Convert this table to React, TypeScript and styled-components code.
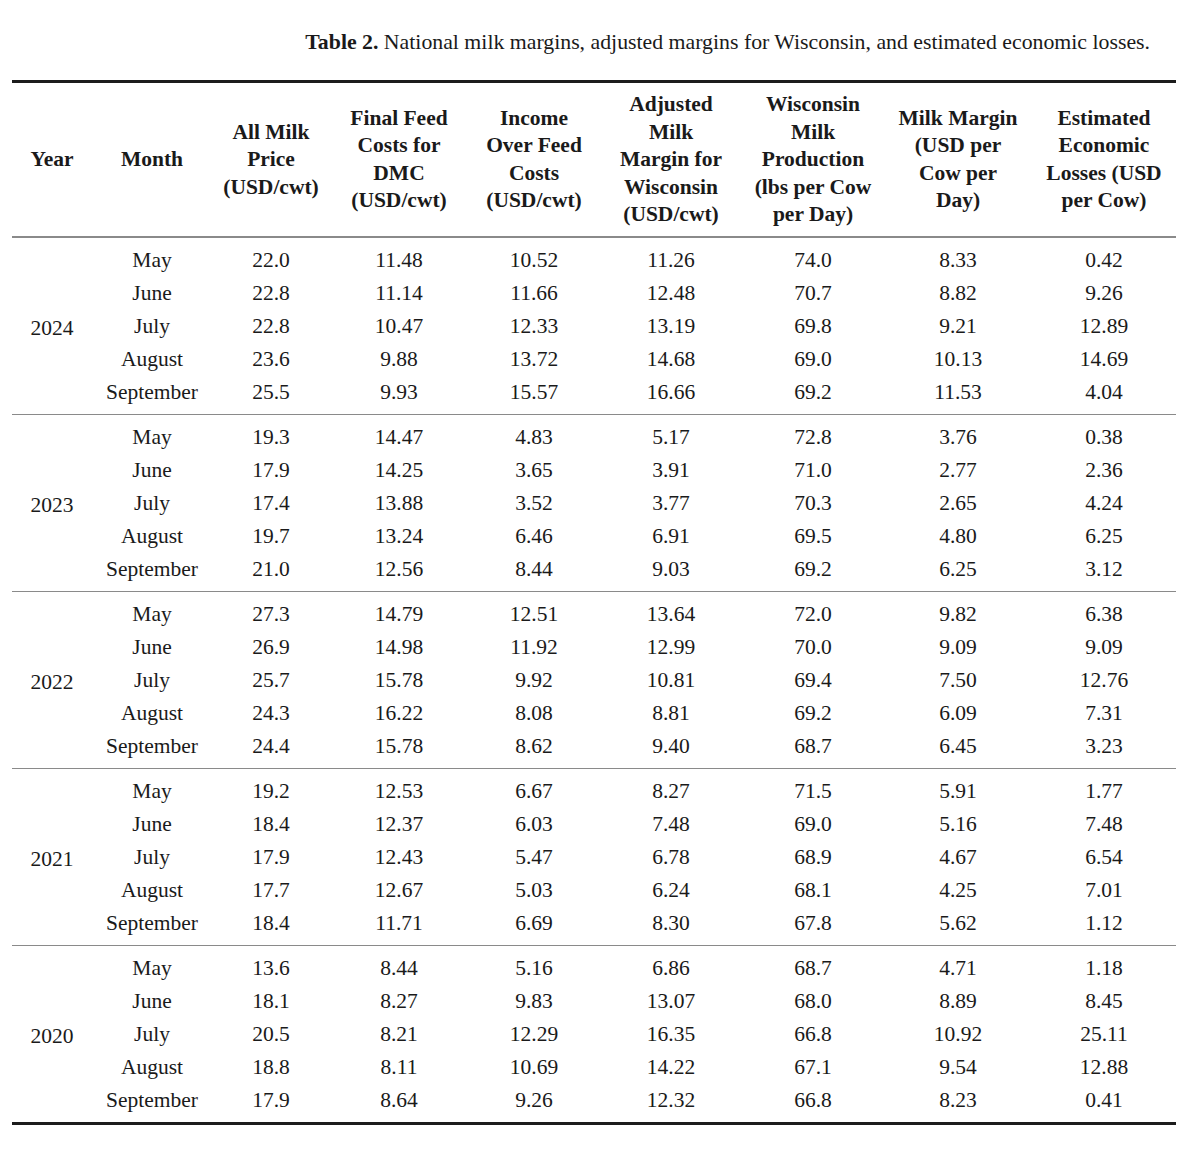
import React from 'react'
import styled, { createGlobalStyle } from 'styled-components'

const GlobalStyle = createGlobalStyle`
  html, body {
    margin: 0;
    padding: 0;
    background: #ffffff;
  }
  body {
    font-family: 'Liberation Serif', 'Times New Roman', serif;
    color: #1a1a1a;
  }
`

const Page = styled.div`
  width: 1200px;
  height: 1153px;
  padding: 29px 24px 0 12px;
  box-sizing: border-box;
`

const Caption = styled.div`
  text-align: right;
  font-size: 21.8px;
  line-height: 26px;
  padding-right: 26px;
  margin-bottom: 25px;
  b {
    font-weight: 700;
  }
`

const Table = styled.table`
  width: 1164px;
  border-collapse: collapse;
  table-layout: fixed;
  border-top: 3px solid #1c1c1c;
  border-bottom: 3px solid #1c1c1c;
`

const HeadCell = styled.th`
  font-weight: 700;
  font-size: 21.5px;
  line-height: 27.5px;
  text-align: center;
  vertical-align: middle;
  padding: 8px 0 7px;
  border-bottom: 2px solid #8a8a8a;
`

const Group = styled.tbody<{ $last?: boolean }>`
  border-bottom: ${(p) => (p.$last ? 'none' : '1.5px solid #8a8a8a')};
  tr:first-child td {
    padding-top: 6px;
  }
  tr:last-child td {
    padding-bottom: 5px;
  }
`

const Cell = styled.td`
  font-size: 21.5px;
  height: 33px;
  line-height: 33px;
  padding: 0;
  text-align: center;
  vertical-align: middle;
`

const YearCell = styled(Cell)`
  vertical-align: middle;
`

const widths = [80, 120, 118, 138, 132, 142, 142, 148, 144]

const headers: string[][] = [
  ['Year'],
  ['Month'],
  ['All Milk', 'Price', '(USD/cwt)'],
  ['Final Feed', 'Costs for', 'DMC', '(USD/cwt)'],
  ['Income', 'Over Feed', 'Costs', '(USD/cwt)'],
  ['Adjusted', 'Milk', 'Margin for', 'Wisconsin', '(USD/cwt)'],
  ['Wisconsin', 'Milk', 'Production', '(lbs per Cow', 'per Day)'],
  ['Milk Margin', '(USD per', 'Cow per', 'Day)'],
  ['Estimated', 'Economic', 'Losses (USD', 'per Cow)'],
]

const months = ['May', 'June', 'July', 'August', 'September']

const data: { year: string; rows: string[][] }[] = [
  {
    year: '2024',
    rows: [
      ['22.0', '11.48', '10.52', '11.26', '74.0', '8.33', '0.42'],
      ['22.8', '11.14', '11.66', '12.48', '70.7', '8.82', '9.26'],
      ['22.8', '10.47', '12.33', '13.19', '69.8', '9.21', '12.89'],
      ['23.6', '9.88', '13.72', '14.68', '69.0', '10.13', '14.69'],
      ['25.5', '9.93', '15.57', '16.66', '69.2', '11.53', '4.04'],
    ],
  },
  {
    year: '2023',
    rows: [
      ['19.3', '14.47', '4.83', '5.17', '72.8', '3.76', '0.38'],
      ['17.9', '14.25', '3.65', '3.91', '71.0', '2.77', '2.36'],
      ['17.4', '13.88', '3.52', '3.77', '70.3', '2.65', '4.24'],
      ['19.7', '13.24', '6.46', '6.91', '69.5', '4.80', '6.25'],
      ['21.0', '12.56', '8.44', '9.03', '69.2', '6.25', '3.12'],
    ],
  },
  {
    year: '2022',
    rows: [
      ['27.3', '14.79', '12.51', '13.64', '72.0', '9.82', '6.38'],
      ['26.9', '14.98', '11.92', '12.99', '70.0', '9.09', '9.09'],
      ['25.7', '15.78', '9.92', '10.81', '69.4', '7.50', '12.76'],
      ['24.3', '16.22', '8.08', '8.81', '69.2', '6.09', '7.31'],
      ['24.4', '15.78', '8.62', '9.40', '68.7', '6.45', '3.23'],
    ],
  },
  {
    year: '2021',
    rows: [
      ['19.2', '12.53', '6.67', '8.27', '71.5', '5.91', '1.77'],
      ['18.4', '12.37', '6.03', '7.48', '69.0', '5.16', '7.48'],
      ['17.9', '12.43', '5.47', '6.78', '68.9', '4.67', '6.54'],
      ['17.7', '12.67', '5.03', '6.24', '68.1', '4.25', '7.01'],
      ['18.4', '11.71', '6.69', '8.30', '67.8', '5.62', '1.12'],
    ],
  },
  {
    year: '2020',
    rows: [
      ['13.6', '8.44', '5.16', '6.86', '68.7', '4.71', '1.18'],
      ['18.1', '8.27', '9.83', '13.07', '68.0', '8.89', '8.45'],
      ['20.5', '8.21', '12.29', '16.35', '66.8', '10.92', '25.11'],
      ['18.8', '8.11', '10.69', '14.22', '67.1', '9.54', '12.88'],
      ['17.9', '8.64', '9.26', '12.32', '66.8', '8.23', '0.41'],
    ],
  },
]

export default function App() {
  return (
    <>
      <GlobalStyle />
      <Page>
        <Caption>
          <b>Table 2.</b> National milk margins, adjusted margins for Wisconsin, and estimated economic losses.
        </Caption>
        <Table>
          <colgroup>
            {widths.map((w, i) => (
              <col key={i} style={{ width: w }} />
            ))}
          </colgroup>
          <thead>
            <tr>
              {headers.map((lines, i) => (
                <HeadCell key={i}>
                  {lines.map((l, j) => (
                    <div key={j}>{l}</div>
                  ))}
                </HeadCell>
              ))}
            </tr>
          </thead>
          {data.map((group, gi) => (
            <Group key={group.year} $last={gi === data.length - 1}>
              {group.rows.map((row, ri) => (
                <tr key={ri}>
                  {ri === 0 && <YearCell rowSpan={5}>{group.year}</YearCell>}
                  <Cell>{months[ri]}</Cell>
                  {row.map((v, ci) => (
                    <Cell key={ci}>{v}</Cell>
                  ))}
                </tr>
              ))}
            </Group>
          ))}
        </Table>
      </Page>
    </>
  )
}
